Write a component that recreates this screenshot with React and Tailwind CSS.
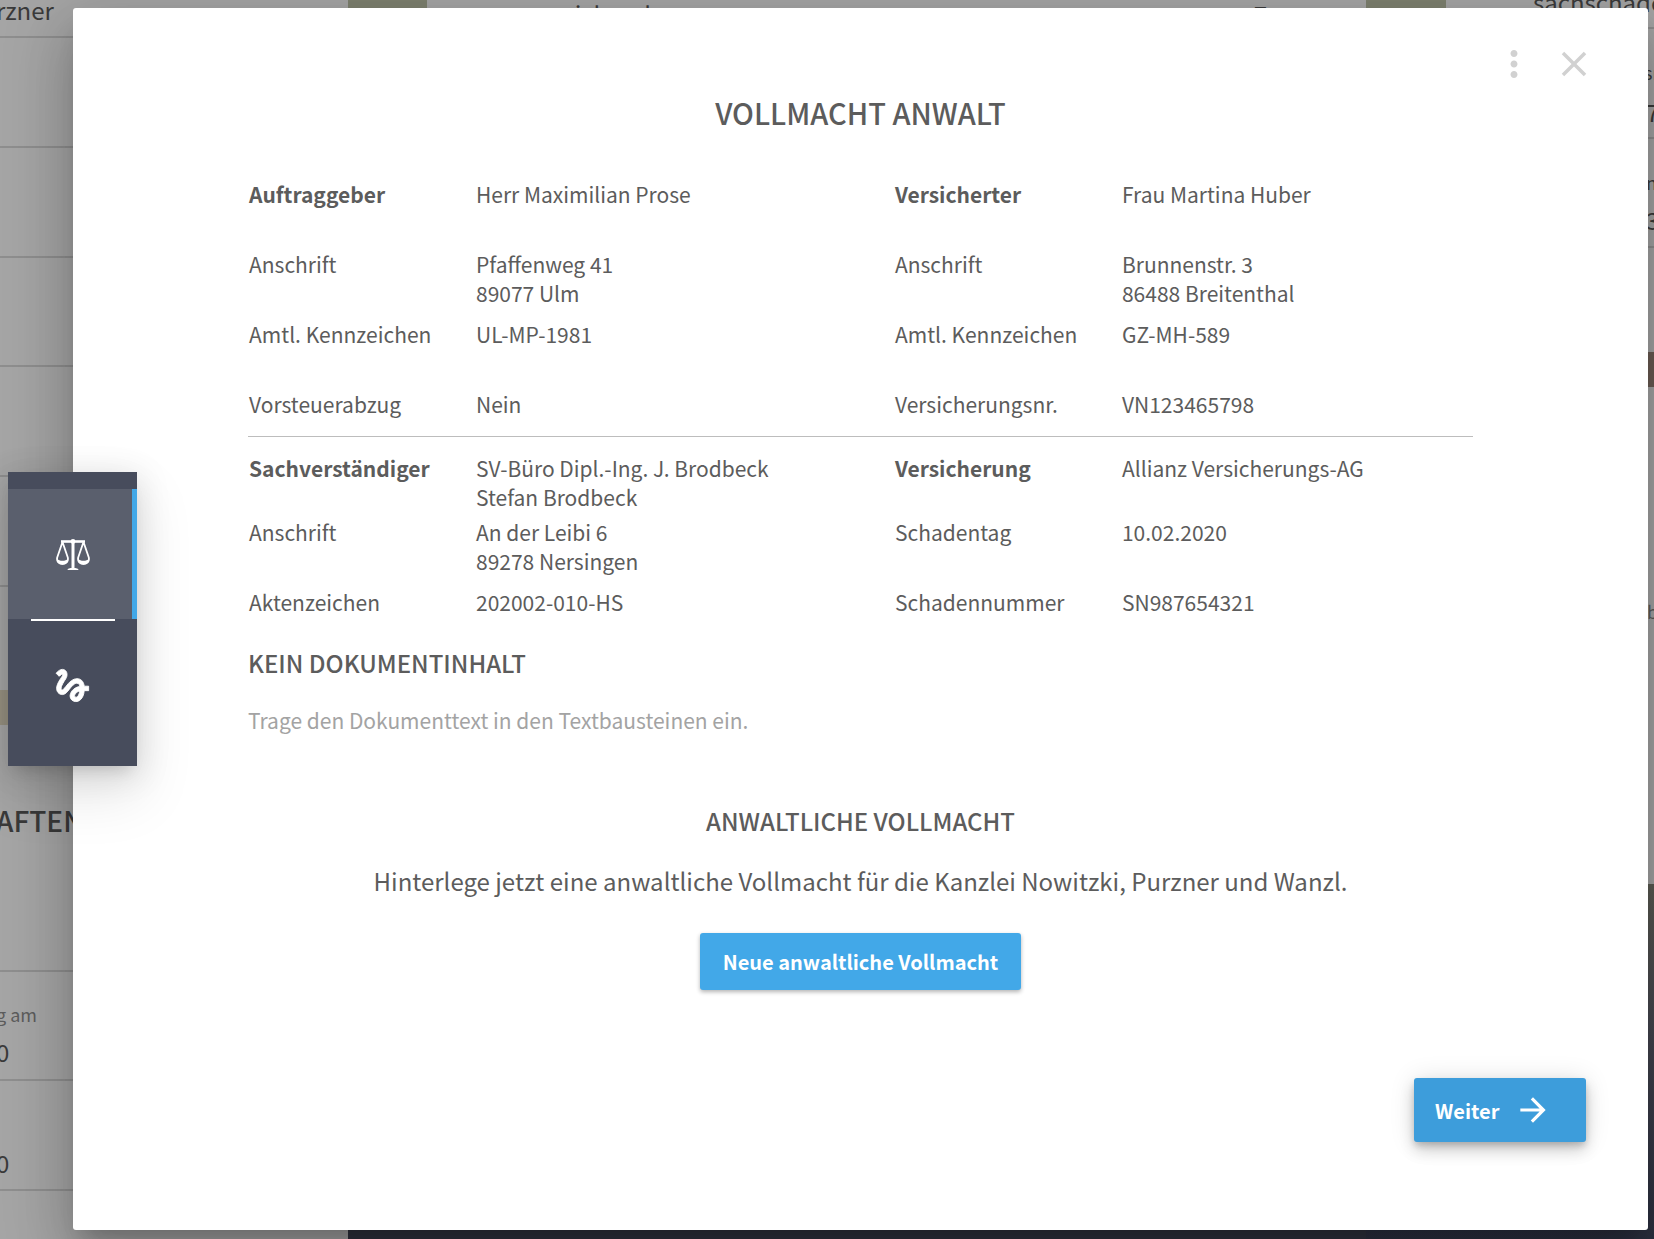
import { MdGesture, MdMoreVert, MdClose, MdArrowForward } from "react-icons/md";

function ScalesIcon() {
  return (
    <svg viewBox="0 -1 34 32" className="h-8 w-[34px]" fill="none" stroke="currentColor" aria-hidden="true">
      <path d="M5 2.500h24" strokeWidth="2.600" />
      <path d="M17 1v29" strokeWidth="3" />
      <circle cx="17" cy="2.400" r="2.400" fill="currentColor" stroke="none" />
      <path d="M11.500 31c0-1.600 2-2 5.500-2s5.500.4 5.500 2z" fill="currentColor" stroke="none" />
      <path
        d="M6.500 3L1.200 18.500c-.8 4 1.600 6.300 5.300 6.300s6.100-2.300 5.300-6.300zM27.500 3l-5.300 15.500c-.8 4 1.600 6.300 5.300 6.300s6.100-2.300 5.300-6.300z"
        strokeWidth="1.800"
        strokeLinejoin="round"
      />
      <path
        d="M1 19.500c1.500 1.900 3.200 2.300 5.500 2.300s4-.4 5.500-2.300c.6 3.800-2 6.200-5.500 6.200s-6.100-2.400-5.500-6.200zM22 19.500c1.500 1.900 3.200 2.300 5.500 2.300s4-.4 5.500-2.300c.6 3.800-2 6.200-5.500 6.200s-6.100-2.400-5.500-6.200z"
        fill="currentColor"
        stroke="none"
      />
    </svg>
  );
}

const upperRows = [
  ["Auftraggeber", ["Herr Maximilian Prose"], "Versicherter", ["Frau Martina Huber"], "h-[70px]", true],
  ["Anschrift", ["Pfaffenweg 41", "89077 Ulm"], "Anschrift", ["Brunnenstr. 3", "86488 Breitenthal"], "h-[70px]"],
  ["Amtl. Kennzeichen", ["UL-MP-1981"], "Amtl. Kennzeichen", ["GZ-MH-589"], "h-[70px]"],
  ["Vorsteuerabzug", ["Nein"], "Versicherungsnr.", ["VN123465798"], "h-[46px] border-b border-[#bdbdbd]"],
];

const lowerRows = [
  ["Sachverständiger", ["SV-Büro Dipl.-Ing. J. Brodbeck", "Stefan Brodbeck"], "Versicherung", ["Allianz Versicherungs-AG"], "h-16", true],
  ["Anschrift", ["An der Leibi 6", "89278 Nersingen"], "Schadentag", ["10.02.2020"], "h-[70px]"],
  ["Aktenzeichen", ["202002-010-HS"], "Schadennummer", ["SN987654321"], "h-[29px]"],
];

function DetailTable({ rows, className }) {
  return (
    <table className={"w-full table-fixed border-collapse text-left text-[21px] leading-[29px] " + className}>
      <colgroup>
        <col className="w-[228px]" />
        <col className="w-[34.2%]" />
        <col className="w-[227px]" />
        <col />
      </colgroup>
      <tbody>
        {rows.map(([a, av, b, bv, height, strong]) => (
          <tr key={a} className={height + " align-top"}>
            <th className={strong ? "pl-px font-bold" : "pl-px font-normal"}>{a}</th>
            <td>{av.map((line) => <div key={line}>{line}</div>)}</td>
            <th className={strong ? "font-bold" : "font-normal"}>{b}</th>
            <td>{bv.map((line) => <div key={line}>{line}</div>)}</td>
          </tr>
        ))}
      </tbody>
    </table>
  );
}

function Backdrop() {
  return (
    <div className="absolute inset-0 flex overflow-hidden bg-[#a5a5a5] text-2xl leading-7 text-[#3a3a3a]" aria-hidden="true">
      <div className="flex w-[348px] shrink-0 flex-col">
        <div className="flex h-[38px] shrink-0 items-start border-b-2 border-[#8e8e8e]">
          <span className="-mt-1 -ml-1">rzner</span>
        </div>
        <div className="h-[110px] shrink-0 border-b-2 border-[#8e8e8e]" />
        <div className="h-[110px] shrink-0 border-b-2 border-[#8e8e8e]" />
        <div className="h-[109px] shrink-0 border-b-2 border-[#8e8e8e]" />
        <div className="h-[110px] shrink-0 border-b-2 border-[#8e8e8e]" />
        <div className="h-[110px] shrink-0 border-b-2 border-[#8e8e8e]" />
        <div className="mt-[103px] h-[35px] w-20 shrink-0 bg-[#979181]" />
        <div className="flex h-[247px] shrink-0 items-start border-b-2 border-[#8e8e8e] pt-[81px] text-[28px] font-medium">
          <span className="-ml-1">AFTEN</span>
        </div>
        <div className="flex h-[109px] shrink-0 flex-col border-b-2 border-[#8e8e8e] pt-7">
          <span className="-ml-1 text-lg leading-7 text-[#5c5c5c]">g am</span>
          <span className="-ml-1 mt-2.5">0</span>
        </div>
        <div className="flex h-[110px] shrink-0 flex-col justify-end border-b-2 border-[#8e8e8e] pb-3">
          <span className="-ml-1">0</span>
        </div>
      </div>
      <div className="flex grow flex-col justify-between">
        <div className="flex h-10">
          <div className="w-[79px] shrink-0 bg-[#7d806f]" />
          <span className="ml-[86px]">ausreichend</span>
          <span className="mr-[99px] ml-auto">7</span>
        </div>
        <div className="h-10 bg-[#30333f]" />
      </div>
      <div className="flex w-[288px] shrink-0 flex-col">
        <div className="flex h-[29px] shrink-0 border-b-2 border-[#8e8e8e]">
          <div className="w-20 shrink-0 bg-[#7d806f]" />
          <span className="-mt-3 ml-[87px] whitespace-nowrap">sachschaden</span>
        </div>
        <div className="flex h-[110px] shrink-0 flex-col border-b-2 border-[#8e8e8e] pt-[29px] pl-[278px]">
          <span className="text-lg leading-7">sr</span>
          <span className="mt-3 pl-0.5">7</span>
        </div>
        <div className="flex h-[109px] shrink-0 flex-col border-b-2 border-[#8e8e8e] pt-[29px] pl-[280px]">
          <span className="text-lg leading-7">n</span>
          <span className="mt-2.5">3</span>
        </div>
        <div className="mt-[104px] h-[35px] w-20 shrink-0 self-end bg-[#6b5c54]" />
        <div className="h-[497px] shrink-0 pt-[210px] pl-[281px] text-lg leading-7 text-[#5c5c5c]">b</div>
        <div className="grow bg-linear-to-b from-[#5c5c54] via-[#43444f] via-45% to-[#2b3040]" />
      </div>
    </div>
  );
}

export default function App() {
  return (
    <div className="relative min-h-screen overflow-hidden font-['Noto_Sans_CJK_SC','Noto_Sans',sans-serif] text-[#5c5c5c]">
      <Backdrop />
      <main
        role="dialog"
        aria-labelledby="dialog-title"
        className="relative mt-2 mr-1.5 mb-[9px] ml-[73px] flex min-h-[calc(100vh-17px)] flex-col rounded-[3px] bg-white px-[62px] shadow-[0_16px_22px_-10px_rgba(0,0,0,0.2),0_35px_56px_4px_rgba(0,0,0,0.14),0_13px_67px_12px_rgba(0,0,0,0.12)]"
      >
        <header className="flex justify-end gap-[18px] pt-[35px]">
          <button type="button" aria-label="Mehr" className="text-[#d1d1d1]">
            <MdMoreVert size={42} />
          </button>
          <button type="button" aria-label="Schließen" className="-mr-[9px] text-[#d1d1d1]">
            <MdClose size={42} />
          </button>
        </header>
        <section className="mx-[113px] flex grow flex-col">
          <h1 id="dialog-title" className="mt-1.5 text-center text-[29px] leading-[42px] font-medium">
            VOLLMACHT ANWALT
          </h1>
          <DetailTable rows={upperRows} className="mt-[47px]" />
          <DetailTable rows={lowerRows} className="mt-[17px]" />
          <h2 className="mt-7 text-2xl leading-9 font-medium">KEIN DOKUMENTINHALT</h2>
          <p className="mt-6 text-[21px] leading-[30px] text-[#a3a3a3]">Trage den Dokumenttext in den Textbausteinen ein.</p>
          <h2 className="mt-[68px] text-center text-2xl leading-9 font-medium">ANWALTLICHE VOLLMACHT</h2>
          <p className="mt-6 text-center text-2xl leading-9">
            Hinterlege jetzt eine anwaltliche Vollmacht für die Kanzlei Nowitzki, Purzner und Wanzl.
          </p>
          <button
            type="button"
            className="mt-[34px] h-[57px] self-center rounded-[3px] bg-[#42a8e8] px-[23px] pt-0.5 text-xl font-bold text-white shadow-[0_2px_4px_rgba(0,0,0,0.3)]"
          >
            Neue anwaltliche Vollmacht
          </button>
        </section>
        <footer className="mb-[88px] flex justify-end">
          <button
            type="button"
            className="flex h-16 w-[172px] items-center gap-[15px] rounded-[3px] bg-[#3d9ddb] pl-[21px] text-xl font-bold text-white shadow-[0_4px_7px_-1px_rgba(0,0,0,0.2),0_9px_15px_rgba(0,0,0,0.14),0_1px_26px_rgba(0,0,0,0.12)]"
          >
            <span className="pt-0.5">Weiter</span>
            <MdArrowForward size={38} />
          </button>
        </footer>
      </main>
      <nav
        aria-label="Schritte"
        className="absolute top-[472px] left-2 flex w-[129px] flex-col bg-[#474c5c] py-[17px] text-white shadow-[0_10px_14px_-8px_rgba(0,0,0,0.15),0_26px_56px_4px_rgba(0,0,0,0.1),0_6px_30px_4px_rgba(0,0,0,0.1)]"
      >
        <button type="button" aria-label="Anwalt" className="flex h-[130px] items-center justify-center border-r-[5px] border-[#42a8e8] bg-[#5a5f6d] pl-[5px]">
          <ScalesIcon />
        </button>
        <button type="button" aria-label="Unterschrift" className="flex h-[130px] flex-col items-center">
          <span className="h-0.5 w-[84px] bg-white" />
          <span className="flex grow items-center">
            <MdGesture size={43} className="stroke-current stroke-[0.5] [&>path:first-child]:stroke-none" />
          </span>
        </button>
      </nav>
    </div>
  );
}
